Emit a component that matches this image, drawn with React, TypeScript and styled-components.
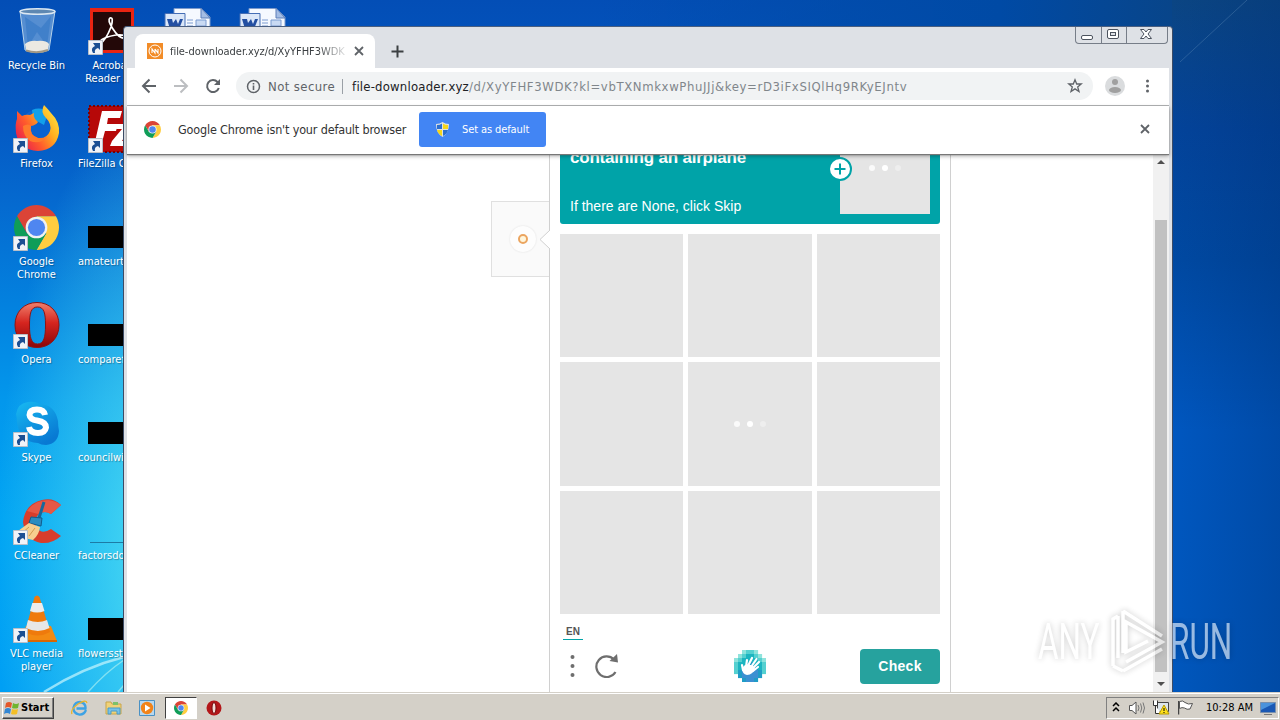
import React from 'react';
import styled, { createGlobalStyle, css } from 'styled-components';

const GlobalStyle = createGlobalStyle`
  * {
    box-sizing: border-box;
  }

  body {
    margin: 0;
    overflow: hidden;
    font-family: 'DejaVu Sans Condensed', 'DejaVu Sans', sans-serif;
    font-size: 11px;
  }

  svg {
    display: block;
    flex: none;
  }
`;

const Desktop = styled.div`
  position: relative;
  display: flex;
  flex-direction: column;
  width: 1280px;
  height: 720px;
  overflow: hidden;
  background:
    radial-gradient(ellipse 175px 470px at 170px 560px, rgba(92, 230, 242, 0.9), rgba(60, 210, 245, 0) 100%),
    linear-gradient(90deg, rgba(0, 0, 0, 0) 1172px, rgba(0, 45, 110, 0.3) 1280px),
    linear-gradient(90deg, rgba(0, 60, 140, 0) 600px, #004aa5 1000px, #08458a 1172px) 0 0 / 1172px 27px no-repeat,
    linear-gradient(180deg, #0b4583 0, #03439a 130px, #0049a2 260px, #0057c0 430px, #0057bd 692px) 1172px 0 / 108px 100% no-repeat,
    linear-gradient(180deg, #034eb6 0, #0459c3 120px, #0569cf 200px, #0380de 300px, #0397ec 400px, #00a4f3 520px, #009ff4 692px);
`;

const Wallpaper = styled.svg`
  position: absolute;
  inset: 0;
`;

const IconGrid = styled.div`
  flex: 1;
  display: grid;
  grid-template-columns: repeat(4, 73px);
  grid-template-rows: repeat(7, 98px);
  grid-auto-flow: column;
  column-gap: 2px;
  min-height: 0;
  padding-top: 7px;
`;

const Shortcut = styled.div<{ $column?: number }>`
  position: relative;
  display: flex;
  flex-direction: column;
  align-items: center;
  ${props => props.$column && css`
    grid-column: ${props.$column};
    grid-row: 1;
  `}
`;

const Thumb = styled.div`
  display: flex;
  align-items: center;
  justify-content: center;
  width: 48px;
  height: 48px;
  margin-bottom: 4px;
`;

const BlackThumb = styled.div`
  align-self: flex-end;
  width: 48px;
  height: 22px;
  margin-bottom: 3px;
  background: #000;
`;

const ShortcutName = styled.div<{ $start?: boolean }>`
  align-self: ${props => props.$start ? 'flex-start' : 'center'};
  padding-left: ${props => props.$start ? '3px' : '0'};
  color: #fff;
  line-height: 13px;
  text-align: center;
  white-space: pre;
  text-shadow: 1px 1px 1px rgba(0, 0, 0, 0.3);
`;

const ArrowBadge = styled.svg`
  position: absolute;
  left: 13px;
  top: 33px;
`;

const Window = styled.div`
  position: absolute;
  left: 123px;
  top: 26px;
  display: flex;
  flex-direction: column;
  width: 1050px;
  height: 666px;
  padding: 0 3px;
  border: 1px solid #3d4c66;
  border-top-color: #4a5f80;
  border-bottom: 0;
  border-radius: 4px 4px 0 0;
  background: #dee1e6;
  overflow: hidden;
`;

const TabStrip = styled.div`
  display: flex;
  align-items: flex-start;
  flex: none;
  height: 41px;
  padding-left: 8px;
`;

const Tab = styled.div`
  display: flex;
  align-items: center;
  width: 240px;
  height: 34px;
  margin-top: 7px;
  padding: 0 9px 0 12px;
  border-radius: 8px 8px 0 0;
  background: #fff;
`;

const TabTitle = styled.div`
  flex: none;
  width: 176px;
  margin: 0 8px 0 7px;
  overflow: hidden;
  color: #3c4043;
  letter-spacing: -0.05px;
  white-space: nowrap;
  mask-image: linear-gradient(90deg, #000 148px, transparent 180px);
`;

const NewTab = styled.svg`
  margin: 18px 0 0 16px;
`;

const Caption = styled.div`
  display: flex;
  width: 93px;
  height: 17px;
  margin: 0 1px 0 auto;
  border: 1px solid #767d88;
  border-top: 0;
  border-radius: 0 0 4px 4px;
`;

const CaptionButton = styled.div<{ $width: number }>`
  display: flex;
  align-items: center;
  justify-content: center;
  width: ${props => props.$width}px;
  padding: 0 2px 2px 0;

  & + & {
    border-left: 1px solid #767d88;
  }
`;

const Toolbar = styled.div`
  display: flex;
  align-items: center;
  flex: none;
  height: 38px;
  padding: 0 11px 1px 14px;
  border-bottom: 1px solid #b0b2b4;
  background: #fff;
`;

const NavIcons = styled.div`
  display: flex;
  gap: 16px;
`;

const Omnibox = styled.div`
  display: flex;
  align-items: center;
  width: 857px;
  height: 28px;
  margin-left: 15px;
  padding: 0 10px;
  border-radius: 14px;
  background: #f1f3f4;
`;

const Security = styled.span`
  margin-left: 7px;
  padding-right: 7px;
  border-right: 1px solid #9aa0a6;
  color: #5f6368;
  font-size: 13px;
  letter-spacing: 0.4px;
  line-height: 15px;
  white-space: nowrap;
`;

const Url = styled.span`
  flex: 1;
  margin-left: 9px;
  color: #80868b;
  font-size: 13px;
  letter-spacing: 0.62px;
  white-space: nowrap;
`;

const Host = styled.span`
  color: #202124;
  letter-spacing: 0.2px;
`;

const Avatar = styled.svg`
  margin: 0 12px 0 12px;
`;

const InfoBar = styled.div`
  position: relative;
  z-index: 1;
  display: flex;
  align-items: center;
  flex: none;
  height: 48px;
  padding: 0 19px 2px 17px;
  background: #fff;
  box-shadow: 0 1px 1px #777, 0 2px 4px rgba(0, 0, 0, 0.35);
`;

const InfoText = styled.span`
  width: 229px;
  margin: 0 12px 0 17px;
  color: #333;
  font-size: 12.5px;
  letter-spacing: -0.17px;
  white-space: nowrap;
`;

const DefaultButton = styled.div`
  display: flex;
  align-items: center;
  width: 127px;
  height: 35px;
  margin-right: auto;
  padding-left: 17px;
  border-radius: 3px;
  background: #4285f4;
  color: #fff;
  letter-spacing: -0.1px;
  white-space: nowrap;

  svg {
    margin-right: 13px;
  }
`;

const Page = styled.div`
  display: flex;
  flex: 1;
  min-height: 0;
  padding-left: 364px;
  background: #fff;
`;

const WidgetBox = styled.div`
  display: flex;
  align-items: center;
  justify-content: space-between;
  width: 58px;
  height: 76px;
  margin-top: 47px;
  padding-left: 18px;
  border: 1px solid #e0e0e0;
  border-right: 0;
  background: #fafafa;
`;

const Spinner = styled.div`
  display: flex;
  align-items: center;
  justify-content: center;
  width: 26px;
  height: 26px;
  border-radius: 50%;
  background: #fdfdfd;
  box-shadow: 0 0 2px #ddd;

  &::after {
    content: '';
    box-sizing: border-box;
    width: 10px;
    height: 10px;
    border: 2px solid #eba560;
    border-radius: 50%;
    background: #fff6dc;
  }
`;

const PopupArrow = styled.svg`
  position: relative;
  z-index: 1;
  margin-right: -1px;
`;

const Challenge = styled.div`
  width: 402px;
  padding: 0 10px;
  border: 1px solid #d0d0d0;
  border-width: 0 1px;
  background: #fff;
`;

const Prompt = styled.div`
  display: flex;
  justify-content: space-between;
  height: 70px;
  padding: 0 10px 10px;
  border-radius: 0 0 3px 3px;
  background: #00a3a8;
  color: #fff;
  font-family: 'Liberation Sans', Arial, sans-serif;
`;

const PromptCopy = styled.div`
  display: flex;
  flex-direction: column;
  justify-content: space-between;
  margin-top: -8px;
`;

const PromptTitle = styled.div`
  font-size: 17px;
  font-weight: 700;
  letter-spacing: -0.2px;
  line-height: 24px;
`;

const PromptHint = styled.div`
  font-size: 14px;
  line-height: 16px;
`;

const Example = styled.div`
  position: relative;
  display: flex;
  justify-content: center;
  width: 90px;
  padding-top: 11px;
  background: #e5e5e5;
`;

const PlusBadge = styled.svg`
  position: absolute;
  left: -12px;
  top: 3px;
`;

const TileGrid = styled.div`
  display: grid;
  grid-template-columns: repeat(3, 1fr);
  grid-auto-rows: 123.33px;
  gap: 5px;
  margin-top: 10px;
`;

const Tile = styled.div`
  display: flex;
  align-items: center;
  justify-content: center;
  background: #e5e5e5;
`;

const Dots = styled.div`
  display: flex;
  gap: 7px;
  height: 6px;

  i {
    width: 6px;
    height: 6px;
    border-radius: 50%;
    background: #fff;
    opacity: 0.8;
  }

  i:nth-child(2) {
    opacity: 1;
  }

  i:last-child {
    opacity: 0.35;
  }
`;

const Language = styled.div`
  width: 20px;
  height: 16px;
  margin: 10px 0 9px 3px;
  border-bottom: 1px solid #00a3a8;
  color: #555;
  font: 700 10px/15px 'Liberation Sans', Arial, sans-serif;
  text-align: center;
`;

const Actions = styled.div`
  display: grid;
  grid-template-columns: 1fr 32px 1fr;
  align-items: center;
  height: 35px;
`;

const ActionIcons = styled.div`
  display: flex;
  align-items: center;
  gap: 19px;
  padding-left: 8px;
`;

const CheckButton = styled.div`
  justify-self: end;
  width: 80px;
  height: 35px;
  border-radius: 4px;
  background: #26a29e;
  color: #fff;
  font: 700 14px/35px 'Liberation Sans', Arial, sans-serif;
  letter-spacing: 0.3px;
  text-align: center;
`;

const Scrollbar = styled.div`
  display: flex;
  flex-direction: column;
  align-items: center;
  justify-content: space-between;
  width: 16px;
  margin-left: auto;
  padding: 6px 0;
  background: #f1f1f1;
`;

const ScrollThumb = styled.div`
  width: 12px;
  height: 452px;
  margin-top: 46px;
  background: #c1c1c1;
`;

const ScrollArrow = styled.div<{ $down?: boolean }>`
  border: 4px solid transparent;
  border-width: ${props => props.$down ? '4px 4px 0' : '0 4px 4px'};
  border-top-color: #505050;
  border-bottom-color: #505050;
`;

const Taskbar = styled.div`
  display: flex;
  align-items: center;
  height: 28px;
  padding: 3px 1px 1px 2px;
  border-top: 1px solid #d4d0c8;
  background: #d4d0c8;
  box-shadow: inset 0 1px #fff;
`;

const raised = css`
  border: 1px solid;
  border-color: #fff #404040 #404040 #fff;
  box-shadow: inset -1px -1px #808080;
`;

const sunken = css`
  border: 1px solid;
  border-color: #808080 #fff #fff #808080;
`;

const StartButton = styled.div`
  ${raised}
  display: flex;
  align-items: center;
  gap: 1px;
  width: 52px;
  height: 22px;
  padding-left: 1px;
  font-weight: 700;
`;

const QuickLaunch = styled.div`
  display: flex;
  align-items: center;
  gap: 17px;
  margin-left: 17px;
`;

const ActiveTask = styled.div`
  ${sunken}
  display: flex;
  align-items: center;
  justify-content: center;
  width: 32px;
  height: 22px;
  margin: 0 9px 0 10px;
  border-color: #404040 #fff #fff #404040;
  background: #fff;
`;

const Tray = styled.div`
  ${sunken}
  display: flex;
  align-items: center;
  width: 173px;
  height: 22px;
  margin-left: auto;
  padding: 0 2px 0 5px;
`;

const TrayIcon = styled.svg`
  margin-left: 8px;
`;

const Clock = styled.span`
  width: 47px;
  margin: 0 7px 0 auto;
  white-space: nowrap;
`;

const Watermark = styled.svg`
  position: absolute;
  left: 1030px;
  top: 600px;
  filter: drop-shadow(0 0 3px rgba(0, 0, 0, 0.35));
  opacity: 0.6;
`;

const ChromeLogo: React.FC<{ size: number }> = ({ size }) => (
  <svg width={size} height={size} viewBox="2 2 44 44">
    <path fill="#db4437" d="M4.95 13A22 22 0 0 1 43.05 13L24 13L14.47 29.5Z" />
    <path fill="#ffcd40" d="M43.05 13A22 22 0 0 1 24 46L33.53 29.5L24 13Z" />
    <path fill="#0f9d58" d="M24 46A22 22 0 0 1 4.95 13L14.47 29.5L33.53 29.5Z" />
    <circle cx="24" cy="24" r="10.6" fill="#f1f1f1" />
    <circle cx="24" cy="24" r="8.4" fill="#4f86f0" />
  </svg>
);

const OperaLogo: React.FC<{ size: number }> = ({ size }) => (
  <svg width={size} height={size} viewBox="0 0 48 48">
    <defs>
      <linearGradient id="opera" x2="0" y2="1">
        <stop offset="0" stopColor="#f0806c" />
        <stop offset=".45" stopColor="#d5251f" />
        <stop offset="1" stopColor="#8c0508" />
      </linearGradient>
    </defs>
    <path
      fill="url(#opera)"
      stroke="#8f1414"
      fillRule="evenodd"
      d="M24 1.500C37 1.500 46 11 46 24S37 46.500 24 46.500S2 37 2 24S11 1.500 24 1.500ZM24.500 6C18 6 16.500 12 16.500 24S18 43 24.500 43S32.500 36 32.500 24S31 6 24.500 6Z"
    />
  </svg>
);

const RecycleBin = () => (
  <svg width="48" height="48" viewBox="0 0 48 48">
    <path d="M7 4L12 43Q24 48 36 43L42 4Z" fill="#a7cbea" fillOpacity=".5" stroke="#b7d3ea" />
    <path d="M12 10L15 40L24 25L34 39L38 9L28 21Z" fill="#276fc0" fillOpacity=".45" />
    <path d="M12 37Q17 33 24 34Q33 33 36 37L35 43Q24 47 13 43Z" fill="#ece9e2" />
    <path d="M13 43.500Q24 47 35 43" stroke="#a19885" strokeWidth="2" fill="none" />
    <ellipse cx="24.500" cy="4.500" rx="17.500" ry="2.800" fill="#5e88b2" stroke="#dce8f2" strokeWidth="1.500" />
  </svg>
);

const Firefox = () => (
  <svg width="48" height="48" viewBox="0 0 48 48">
    <defs>
      <linearGradient id="fox" x1="1" x2="0" y1="0" y2=".7">
        <stop offset="0" stopColor="#fff44f" />
        <stop offset=".4" stopColor="#ffb01f" />
        <stop offset=".7" stopColor="#ff5a2c" />
        <stop offset="1" stopColor="#e8204f" />
      </linearGradient>
    </defs>
    <circle cx="25" cy="20" r="16" fill="#0a62d0" />
    <path d="M19 5Q29 1 35 8L31 20L20 14Z" fill="#12a0ea" />
    <path
      fill="url(#fox)"
      d="M4 6L9 11Q13 9 17 10L21 8Q20 11 22 14L25 17Q23 20 18 21Q16 30 25 33Q34 34 37 26Q39 19 33 13Q27 7 31 0Q34 3 38 8Q47 17 46 28Q43 45 25 46Q6 45 3 28Q2 18 4 14Z"
    />
    <path d="M10 21Q15 18 18 21Q16 30 25 33Q30 34 34 32Q27 40 17 36Q10 31 10 21Z" fill="#ff7a2c" />
  </svg>
);

const Acrobat = () => (
  <svg width="48" height="48" viewBox="0 0 48 48">
    <path d="M2 1H46V46H2Z" fill="#e92412" />
    <path d="M5 5H43V43H5Z" fill="#230808" />
    <path
      d="M12 37Q18 33 23 20Q26 10 22 11Q19 13 25 22Q32 33 38 31Q39 27 28 28Q16 30 12 34Q10 37 13 36"
      fill="none"
      stroke="#fff"
      strokeWidth="1.700"
    />
  </svg>
);

const FileZilla = () => (
  <svg width="48" height="48" viewBox="0 0 48 48">
    <path d="M1 1H47V47H1Z" fill="#b60808" stroke="#7c0000" strokeWidth="2" strokeDasharray="2" />
    <path d="M14 6H34L32 13H20L19 19H30L28 26H17L13 41H6Z" fill="#fff" />
    <path d="M29 19H44L34 36H42L40 41H22L24 36L34 24H28Z" fill="#fff" />
  </svg>
);

const WordDoc = () => (
  <svg width="48" height="48" viewBox="0 0 48 48">
    <path d="M11 1.500H38L47 10V46H11Z" fill="#f5f9ff" stroke="#7d9acb" />
    <path d="M38 1L47 11H38Z" fill="#a4bde4" stroke="#5c7eb9" />
    <path d="M24 13H30M24 16H30M24 19H30M33 13H43V19H33Z" stroke="#7a9bd0" fill="#c9daf3" />
    <path d="M2 6.500H22V22H2Z" fill="#dbe7f8" stroke="#456eb5" />
    <path d="M4 12H9L10 16L13 12L15 17L17 12H20L16 22H13L12 20L10 22H7Z" fill="#234fa2" />
  </svg>
);

const Skype = () => (
  <svg width="48" height="48" viewBox="0 0 48 48">
    <defs>
      <linearGradient id="skype" x2=".6" y2="1">
        <stop offset="0" stopColor="#18baf2" />
        <stop offset="1" stopColor="#0879d3" />
      </linearGradient>
    </defs>
    <path d="M15 3Q22 2 27 5Q42 6 45 22Q45 27 46 32Q45 45 33 46Q28 46 25 44Q7 43 4 24Q4 19 3 15Q5 4 15 3Z" fill="url(#skype)" />
    <path
      d="M32 16Q31 10.500 24 10.500Q16.500 10.500 16.500 16Q17 20.500 24 21.500Q33 23 33 28.500Q32 34 25 34Q17 34 16 28"
      stroke="#fff"
      strokeWidth="6"
      fill="none"
    />
  </svg>
);

const CCleaner = () => (
  <svg width="48" height="48" viewBox="0 0 48 48">
    <path d="M48 8L38 17Q32 13 26 17Q20 23 24 31Q29 38 38 32L48 39Q39 47 28 46Q12 43 10 25Q12 7 29 3Q40 0 48 8Z" fill="#d83d2b" />
    <path d="M48 8L38 17Q31 13 25 17L14 14Q22 3 35 3Q43 4 48 8Z" fill="#e65845" />
    <path d="M31 5L26 21" stroke="#17689b" strokeWidth="3" />
    <path d="M18 20L29 21L28 29L16 26Z" fill="#2a8cc0" stroke="#145c8b" />
    <path d="M16 26L27 30Q26 38 20 43L2 39Q4 34 9 31Z" fill="#f7cf8f" />
    <path d="M16 30L8 37M22 31L16 39" stroke="#d39a4e" />
  </svg>
);

const Vlc = () => (
  <svg width="48" height="48" viewBox="0 0 48 48">
    <path d="M13 31H38L44 46H7Z" fill="#f38a12" />
    <path d="M7 45H44V47H7Z" fill="#d86603" />
    <path d="M21.500 2Q24 -1 26.500 2L37 37Q25 44 12 37Z" fill="#ef7a0c" />
    <path d="M19.300 8H29L31.500 16Q24 19 17 16Z" fill="#ececec" />
    <path d="M15 25Q25 29 34 25L36.500 33Q25 39 13 33Z" fill="#e7e7e7" />
  </svg>
);

const WindowsFlag = () => (
  <svg width="16" height="16" viewBox="0 0 16 16">
    <path d="M2 3Q5 1 8 3L7 8Q4 6 1 8Z" fill="#e4582a" />
    <path d="M9 3Q12 5 15 3L14 8Q11 9 8 8Z" fill="#70b52f" />
    <path d="M1 9Q4 7 7 9L6 14Q3 12 0 14Z" fill="#3487d3" />
    <path d="M8 9Q11 10 14 9L13 14Q10 15 7 14Z" fill="#f4bf27" />
  </svg>
);

const Close = () => (
  <svg width="10" height="10" viewBox="0 0 10 10">
    <path d="M1 1L9 9M9 1L1 9" stroke="#5f6368" strokeWidth="1.800" />
  </svg>
);

const shortcuts: { name: string; icon?: React.ReactNode; start?: boolean; plain?: boolean }[] = [
  { name: 'Recycle Bin', icon: <RecycleBin />, plain: true },
  { name: 'Firefox', icon: <Firefox /> },
  { name: 'Google\nChrome', icon: <ChromeLogo size={45} /> },
  { name: 'Opera', icon: <OperaLogo size={48} /> },
  { name: 'Skype', icon: <Skype /> },
  { name: 'CCleaner', icon: <CCleaner /> },
  { name: 'VLC media\nplayer', icon: <Vlc /> },
  { name: 'Acrobat\nReader DC', icon: <Acrobat /> },
  { name: 'FileZilla C', icon: <FileZilla />, start: true },
  { name: 'amateurt', start: true, plain: true },
  { name: 'comparef', start: true, plain: true },
  { name: 'councilwin', start: true, plain: true },
  {
    name: 'factorsdo',
    start: true,
    plain: true,
    icon: <svg width="44" height="48"><path d="M0 45.500H44" stroke="#1d7ba5" /></svg>,
  },
  { name: 'flowersst', start: true, plain: true },
  { name: '', icon: <WordDoc />, plain: true },
];

const logoRows = [
  '..abba..',
  '.abccba.',
  'abccccba',
  'bccddccb',
  'bcddddcb',
  'bdeeeedb',
  '.deeeed.',
  '..deed..',
];
const logoColors: Record<string, string> = { a: '#8fe3dc', b: '#55d0d0', c: '#1cb5c0', d: '#1f9cc6', e: '#3c8fd2' };

const CaptchaLogo = () => (
  <svg width="32" height="32" viewBox="0 0 32 32">
    {logoRows.map((row, y) => row.split('').map((cell, x) => cell !== '.' && (
      <rect key={`${x}-${y}`} x={x * 4} y={y * 4} width="4.100" height="4.100" fill={logoColors[cell]} />
    )))}
    <path d="M9 20L8 15M12 17L13 10M14 16L18 8M17 17L22.500 9M19 18L25 12M19 21L24 17" stroke="#fff" strokeWidth="2.200" strokeLinecap="round" fill="none" />
    <path d="M11 15L18 15L21 18Q19 25 13 25Q8 24 8 18Z" fill="#fff" />
  </svg>
);

const App: React.FC = () => (
  <Desktop>
    <GlobalStyle />
    <Wallpaper width="1280" height="720">
      <path d="M44 692Q84 667 124 657" stroke="#bdf1fc" strokeWidth="2.500" strokeOpacity=".75" fill="none" />
      <path d="M88 692Q106 672 124 660M118 692L124 685" stroke="#b9f5f2" strokeWidth="1.500" strokeOpacity=".6" fill="none" />
      <path d="M1247 0L1180 62" stroke="#6793bd" strokeOpacity=".35" />
    </Wallpaper>
    <IconGrid>
      {shortcuts.map(item => (
        <Shortcut key={item.name}>
          <Thumb>{item.icon || <BlackThumb />}</Thumb>
          {!item.plain && (
            <ArrowBadge width="15" height="15" viewBox="0 0 15 15">
              <path d="M.5 .5H14.500V14.500H.5Z" fill="#f0f3f8" stroke="#b9bfc8" />
              <path d="M5 13Q2 8 7 6L5 3H12V10L10 8Q6 9 7 13Z" fill="#1c4f93" />
            </ArrowBadge>
          )}
          <ShortcutName $start={item.start}>{item.name}</ShortcutName>
        </Shortcut>
      ))}
      <Shortcut $column={4}>
        <Thumb><WordDoc /></Thumb>
      </Shortcut>
    </IconGrid>

    <Window>
      <TabStrip>
        <Tab>
          <svg width="16" height="16" viewBox="0 0 16 16">
            <path d="M0 0H16V16H0Z" fill="#f28c28" />
            <circle cx="8" cy="8" r="6" stroke="#fff" fill="none" />
            <path d="M5 10V6L8 10V6M8 6L11 10V6" stroke="#fff" strokeWidth="1.100" fill="none" />
          </svg>
          <TabTitle>file-downloader.xyz/d/XyYFHF3WDK</TabTitle>
          <Close />
        </Tab>
        <NewTab width="13" height="13" viewBox="0 0 13 13">
          <path d="M6.500 .5V12.500M.5 6.500H12.500" stroke="#3c4043" strokeWidth="2" />
        </NewTab>
        <Caption>
          <CaptionButton $width={25}>
            <svg width="13" height="15"><rect x=".5" y="8.500" width="11" height="4" rx="1.500" fill="#fff" stroke="#4c535e" /></svg>
          </CaptionButton>
          <CaptionButton $width={25}>
            <svg width="13" height="11">
              <rect x=".5" y=".5" width="11" height="9" rx="1.500" fill="#fff" stroke="#4c535e" />
              <rect x="3.500" y="3.500" width="5" height="3" fill="#dee1e6" stroke="#4c535e" />
            </svg>
          </CaptionButton>
          <CaptionButton $width={41}>
            <svg width="12" height="11" viewBox="0 0 12 11">
              <path d="M.5 .5H4L6 3L8 .5H11.500L8 5L11.500 9.500H8L6 7L4 9.500H.5L4 5Z" fill="#fff" stroke="#4c535e" />
            </svg>
          </CaptionButton>
        </Caption>
      </TabStrip>

      <Toolbar>
        <NavIcons>
          <svg width="16" height="16" viewBox="0 0 16 16"><path d="M15 8H2M8.500 1.500L2 8L8.500 14.500" stroke="#5f6368" strokeWidth="2" fill="none" /></svg>
          <svg width="16" height="16" viewBox="0 0 16 16"><path d="M1 8H14M7.500 1.500L14 8L7.500 14.500" stroke="#bcbec1" strokeWidth="2" fill="none" /></svg>
          <svg width="16" height="16" viewBox="0 0 16 16">
            <path d="M13.800 10A6 6 0 1 1 12.500 4L14 5.500" stroke="#5f6368" strokeWidth="2" fill="none" />
            <path d="M15 1V7H9Z" fill="#5f6368" />
          </svg>
        </NavIcons>
        <Omnibox>
          <svg width="15" height="15" viewBox="0 0 15 15">
            <circle cx="7.500" cy="7.500" r="6" stroke="#5f6368" strokeWidth="1.500" fill="none" />
            <path d="M7.500 6.500V11M7.500 4V5.500" stroke="#5f6368" strokeWidth="1.600" />
          </svg>
          <Security>Not secure</Security>
          <Url><Host>file-downloader.xyz</Host>/d/XyYFHF3WDK?kl=vbTXNmkxwPhuJJj&amp;key=rD3iFxSIQlHq9RKyEJntv</Url>
          <svg width="16" height="16" viewBox="0 0 16 16">
            <path d="M8 1.800L9.700 6H14.200L10.700 8.900L12 13.500L8 10.900L4 13.500L5.300 8.900L1.800 6H6.300Z" stroke="#5f6368" strokeWidth="1.300" fill="none" />
          </svg>
        </Omnibox>
        <Avatar width="20" height="20" viewBox="0 0 20 20">
          <circle cx="10" cy="10" r="10" fill="#dadcde" />
          <circle cx="10" cy="6" r="3" fill="#a0a0a0" />
          <ellipse cx="10" cy="14" rx="6" ry="3" fill="#a0a0a0" />
        </Avatar>
        <svg width="20" height="16" viewBox="0 0 20 16">
          <g fill="#5f6368"><circle cx="10.500" cy="3" r="1.500" /><circle cx="10.500" cy="8" r="1.500" /><circle cx="10.500" cy="13" r="1.500" /></g>
        </svg>
      </Toolbar>

      <InfoBar>
        <ChromeLogo size={17} />
        <InfoText>Google Chrome isn't your default browser</InfoText>
        <DefaultButton>
          <svg width="13" height="15" viewBox="0 0 13 15">
            <path d="M6.500 0Q9 2 13 2Q13 11 6.500 15Q0 11 0 2Q4 2 6.500 0Z" fill="#dfe3e0" />
            <path d="M6 1.500V7H1Q1 4 1 3Q4 3 6 1.500ZM7 8H12Q11 12 7 14Z" fill="#2b6fd0" />
            <path d="M7 1.500V7H12V3Q9 3 7 1.500ZM6 8H1Q2 12 6 14Z" fill="#f5d51c" />
          </svg>
          <span>Set as default</span>
        </DefaultButton>
        <Close />
      </InfoBar>

      <Page>
        <WidgetBox>
          <Spinner />
          <PopupArrow width="11" height="19" viewBox="0 0 11 19"><path d="M11 0L1 9.500L11 19" fill="#fff" stroke="#d0d0d0" /></PopupArrow>
        </WidgetBox>
        <Challenge>
          <Prompt>
            <PromptCopy>
              <PromptTitle>containing an airplane</PromptTitle>
              <PromptHint>If there are None, click Skip</PromptHint>
            </PromptCopy>
            <Example>
              <PlusBadge width="24" height="24" viewBox="0 0 24 24">
                <circle cx="12" cy="12" r="11" fill="#fff" stroke="#00a3a8" strokeWidth="2" />
                <path d="M12 6.500V17.500M6.500 12H17.500" stroke="#00a3a8" strokeWidth="2" />
              </PlusBadge>
              <Dots><i /><i /><i /></Dots>
            </Example>
          </Prompt>
          <TileGrid>
            {Array.from({ length: 9 }, (_, i) => (
              <Tile key={i}>{i === 4 && <Dots><i /><i /><i /></Dots>}</Tile>
            ))}
          </TileGrid>
          <Language>EN</Language>
          <Actions>
            <ActionIcons>
              <svg width="8" height="24"><g fill="#6e6e6e"><circle cx="4.500" cy="3" r="2" /><circle cx="4.500" cy="12" r="2" /><circle cx="4.500" cy="21" r="2" /></g></svg>
              <svg width="24" height="24" viewBox="0 0 24 24">
                <path d="M20.500 17A10.300 10.300 0 1 1 19 4.500" transform="translate(0 1)" stroke="#6e6e6e" strokeWidth="2.200" fill="none" />
                <path d="M22 0L23 8.500L14.500 7Z" fill="#6e6e6e" />
              </svg>
            </ActionIcons>
            <CaptchaLogo />
            <CheckButton>Check</CheckButton>
          </Actions>
        </Challenge>
        <Scrollbar>
          <ScrollArrow />
          <ScrollThumb />
          <ScrollArrow $down />
        </Scrollbar>
      </Page>
    </Window>

    <Taskbar>
      <StartButton><WindowsFlag />Start</StartButton>
      <QuickLaunch>
        <svg width="17" height="17" viewBox="0 0 17 17">
          <path d="M15 11Q13 16 8 15.500Q2 14 2.500 8.500Q4 3 9 3Q15 4 14.500 9.500H5.500" stroke="#3da2e4" strokeWidth="2.300" fill="none" />
          <path d="M1 15Q-1 11 7 5Q15 0 16 4" stroke="#e8b52c" strokeWidth="1.300" fill="none" />
        </svg>
        <svg width="17" height="17" viewBox="0 0 17 17">
          <path d="M1 3H6L7 5H16V15H1Z" fill="#f1d277" stroke="#c8a54a" />
          <path d="M3 9H15V15H12V12H6V15H3Z" fill="#78c2e8" stroke="#4a9bc9" />
          <path d="M8 3H13V6H8Z" fill="#7ec16b" />
        </svg>
        <svg width="16" height="16" viewBox="0 0 16 16">
          <path d="M.5 .5H15.500V15.500H.5Z" fill="#b8d8ef" stroke="#4a91c4" />
          <circle cx="8" cy="8" r="6.200" fill="#f28318" />
          <path d="M6 4.500L11.500 8L6 11.500Z" fill="#fff" />
        </svg>
      </QuickLaunch>
      <ActiveTask><ChromeLogo size={14} /></ActiveTask>
      <svg width="16" height="16" viewBox="0 0 16 16">
        <circle cx="8" cy="8" r="7.500" fill="#b3171a" />
        <ellipse cx="8" cy="8" rx="2" ry="5.500" fill="#f3dcd8" stroke="#740609" />
      </svg>
      <Tray>
        <svg width="8" height="12" viewBox="0 0 8 12"><path d="M1 4L4 1L7 4M1 9L4 6L7 9" stroke="#000" strokeWidth="1.500" fill="none" /></svg>
        <TrayIcon width="17" height="14" viewBox="-1 0 17 14">
          <path d="M.5 4.500H3L7 1V13L3 9.500H.5Z" fill="#fff" stroke="#555" />
          <path d="M9 4Q11 7 9 10M11.500 2.500Q14 7 11.500 11.500M14 1.500Q17 7 14 12.500" stroke="#777" fill="none" />
        </TrayIcon>
        <TrayIcon width="17" height="15" viewBox="0 0 17 15">
          <path d="M4.500 2.500H15.500V11.500H4.500Z" fill="#dce4ea" stroke="#444" />
          <path d="M.5 .5V5.500H4.500V.5M2.500 5.500V13.500H8" fill="#fff" stroke="#333" />
          <path d="M11 5L16 14H6Z" fill="#ffe11a" stroke="#b79a00" />
          <path d="M11 8V11M11 12V13" stroke="#000" />
        </TrayIcon>
        <TrayIcon width="17" height="15" viewBox="1 0 17 15">
          <path d="M1.500 1V14.500" stroke="#444" strokeWidth="1.500" />
          <path d="M2.500 1.500Q6 0 8 2.500Q11 5 15.500 3.500L13 9Q10 10 7.500 8Q5 7 2.500 8.500Z" fill="#fff" stroke="#555" />
        </TrayIcon>
        <Clock>10:28 AM</Clock>
        <svg width="16" height="14" viewBox="0 0 16 14">
          <path d="M.5 1.500H15.500V11.500H.5Z" fill="#1a58b4" stroke="#7990ad" />
          <path d="M1 2H15L1 9Z" fill="#4b93dc" />
          <path d="M4 13.500H12" stroke="#777" />
        </svg>
      </Tray>
    </Taskbar>

    <Watermark width="215" height="85" viewBox="0 0 215 85">
      <g fill="#fff" fontFamily="Roboto, sans-serif" fontSize="50">
        <text transform="translate(8 59) scale(.63 1)">ANY</text>
        <text transform="translate(140 59) scale(.63 1)">RUN</text>
      </g>
      <path d="M83 66V19L88 16M93 11V53M93 11L132 36M88 16V58M96 62L132 42L96 22V52L118 41M93 71L132 49M83 66L93 71" fill="none" stroke="#fff" strokeWidth="3.500" />
    </Watermark>
  </Desktop>
);

export default App;
